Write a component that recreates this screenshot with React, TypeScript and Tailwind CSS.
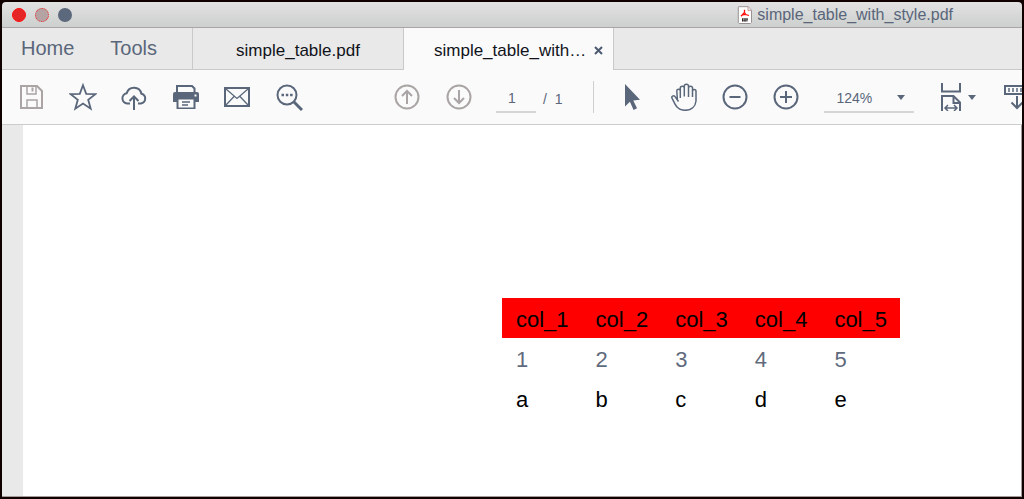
import React, { useState } from "react";

type IconButtonProps = {
  label: string;
  children: React.ReactNode;
  muted?: boolean;
};

function IconButton({ label, children, muted = false }: IconButtonProps) {
  return (
    <button
      type="button"
      aria-label={label}
      className={`size-7 shrink-0 ${muted ? "text-[#aaa4a4]" : "text-[#5a677b]"}`}
    >
      <svg
        viewBox="0 0 28 28"
        className="size-7"
        fill="none"
        stroke="currentColor"
        strokeWidth="2"
        aria-hidden="true"
      >
        {children}
      </svg>
    </button>
  );
}

function PdfFileIcon() {
  return (
    <svg viewBox="0 0 16 18" className="h-[18px] w-4 shrink-0" aria-hidden="true">
      <path d="M1.5 .7h9.8l3.2 3.6v12.2l-1 1H2.2l-.9-1V1.2z" fill="#fff" stroke="#9a9292" />
      <path d="M11 .8v3.6h3.4" fill="#eee" stroke="#c08080" strokeWidth=".8" />
      <path
        d="M7.500 3.800v2.700l-3.500 3.700M7.500 6.500l1.200 2 3.300 1M5.500 8.800l3.200-.5"
        fill="none"
        stroke="#ff1010"
        strokeWidth="1.300"
      />
      <path d="M5 13h6M5.500 14.800h4M5.500 12.500v3M8 12.500v3M10 12.500v3" stroke="#332a2a" strokeWidth="1" />
    </svg>
  );
}

function Caret() {
  return (
    <svg viewBox="0 0 8 5" className="h-[5px] w-2" aria-hidden="true">
      <path d="M0 0h8L4 5z" fill="#5a677b" />
    </svg>
  );
}

function TitleBar() {
  return (
    <header className="flex h-[26px] items-center border-b border-[#aaa6a6] bg-linear-to-b from-[#e2e2e2] to-[#cdd0ce] pr-[69px] pl-[10px]">
      <div className="flex gap-[9px]">
        <button type="button" aria-label="Close window" className="size-[14px] rounded-full border border-[#ff1010] bg-[#e62626]" />
        <button type="button" aria-label="Minimize window" className="size-[14px] rounded-full border border-dotted border-[#ff2020] bg-[#b5a3a3]" />
        <button type="button" aria-label="Zoom window" className="size-[14px] rounded-full bg-[#5c687b]" />
      </div>
      <div className="ml-auto flex items-center gap-1">
        <PdfFileIcon />
        <h1 className="pt-px text-[16px] leading-5 text-[#59657a]">simple_table_with_style.pdf</h1>
      </div>
    </header>
  );
}

function TabBar() {
  return (
    <nav className="flex h-[42px] bg-[#e9e9e9] text-[17px] text-[#11131a]">
      <div className="flex w-[190px] shrink-0 items-center gap-9 border-b border-[#c9c9c9] pb-[2px] pl-[19px] text-[20px] text-[#5a667a]">
        <button type="button">Home</button>
        <button type="button">Tools</button>
      </div>
      <button
        type="button"
        className="w-[211px] shrink-0 border-b border-l border-[#c9c9c9] pt-1"
      >
        simple_table.pdf
      </button>
      <div className="flex w-[211px] shrink-0 items-center justify-between border-x border-[#c9c9c9] bg-[#fafafa] pt-1 pr-[10px] pl-[30px]">
        <button type="button" aria-current="page">
          simple_table_with…
        </button>
        <button type="button" aria-label="Close tab" className="pb-[2px] text-[#4c5a70]">
          <svg viewBox="0 0 9 9" className="size-[9px]" stroke="currentColor" strokeWidth="2" aria-hidden="true">
            <path d="M1 1l7 7M8 1L1 8" />
          </svg>
        </button>
      </div>
      <div className="grow border-b border-[#c9c9c9]" />
    </nav>
  );
}

function Toolbar() {
  const [page, setPage] = useState("1");
  const [zoom, setZoom] = useState("124%");

  return (
    <div className="flex h-[55px] items-center overflow-hidden border-b border-[#cccccc] bg-[#fafafa] pl-[15px] text-[14px] text-[#5a667a]">
      <div className="flex w-[286px] shrink-0 justify-between">
        <IconButton label="Save" muted>
          <path d="M4 3h16l5 5v17H4z" />
          <path d="M10 3v8h9V3M10 25v-8h10v8" strokeWidth="1.500" />
          <path d="M15.500 4.500v4" />
        </IconButton>
        <IconButton label="Add to favorites">
          <path d="M14 2.200l3.200 8.600 9.200.3-7.200 5.700 2.500 8.900L14 20.600l-7.700 5.100 2.500-8.900-7.200-5.700 9.200-.3z" strokeWidth="1.800" />
        </IconButton>
        <IconButton label="Upload to cloud">
          <path d="M10 20.500H7.200a5.200 5.200 0 0 1-.5-10.300 7.600 7.600 0 0 1 14.700.5 5 5 0 0 1-.5 9.800H18" />
          <path d="M14 27V13.500M9.500 18l4.500-4.500 4.500 4.500" />
        </IconButton>
        <IconButton label="Print">
          <path d="M5 10V3h15l2.500 2.500V10" />
          <path d="M3 9h22a2 2 0 0 1 2 2v8h-3.500v7h-19v-7H1v-8a2 2 0 0 1 2-2z" fill="currentColor" stroke="none" />
          <path d="M6.500 16.500h15V24.500h-15z" fill="#fafafa" stroke="none" />
          <path d="M10 19h8M10 22h6" strokeWidth="1.500" />
          <path d="M22.500 12.500h2" stroke="#fafafa" />
        </IconButton>
        <IconButton label="Send by email">
          <path d="M2 5h24v18H2z" />
          <path d="M3 6l11 9.500L25 6M3 22l8-8.500M25 22l-8-8.500" strokeWidth="1.300" />
        </IconButton>
        <IconButton label="Search">
          <circle cx="12" cy="12" r="9.500" />
          <path d="M18.500 18.500l8.500 8.500" strokeWidth="3" />
          <path d="M6.500 12h2.500M10.800 12h2.500M15.100 12h2.500" strokeWidth="2.500" />
        </IconButton>
      </div>

      <div className="ml-[90px] flex w-[80px] shrink-0 justify-between">
        <IconButton label="Previous page" muted>
          <circle cx="14" cy="14" r="11.500" />
          <path d="M14 21V8M9 13l5-5 5 5" />
        </IconButton>
        <IconButton label="Next page" muted>
          <circle cx="14" cy="14" r="11.500" />
          <path d="M14 7v13M9 15l5 5 5-5" />
        </IconButton>
      </div>

      <label className="ml-[23px] flex shrink-0 items-center gap-[7px]">
        <input
          aria-label="Page number"
          value={page}
          onChange={(event) => setPage(event.target.value)}
          className="h-8 w-10 border-b-2 border-[#d6d6d6] bg-transparent pt-1 pr-2 text-center outline-none"
        />
        <span className="pt-1">/&nbsp; 1</span>
      </label>

      <div className="ml-[31px] h-8 w-px shrink-0 bg-[#cfcfcf]" />

      <div className="ml-[25px] flex w-[181px] shrink-0 justify-between">
        <IconButton label="Selection tool">
          <path d="M6 1v22.500l4.900-4.800 3.700 8.300 3.400-1.700-3.700-7.800 6.700-.8z" fill="currentColor" stroke="none" />
        </IconButton>
        <IconButton label="Hand tool">
          <path
            d="M8.500 18.500L5 13.600C3.500 12 1.100 13.200 2 15.200c1.600 3 2.900 6.600 5 8.900 2.400 2.700 5.300 3.200 8 3.200 6.500 0 10.500-3.800 11-9.300V8.200c0-2.400-3.500-2.400-3.500 0V14M22.500 14V5c0-2.500-4-2.500-4 0v9M18.500 13.500V3.300c0-2.700-4.200-2.700-4.200 0v10.200M14.300 13.500V5c0-2.500-4-2.500-4 0v10M10.300 14V8c0-2.300-3.500-2.300-3.500 0l.6 8.500"
            strokeWidth="1.500"
            strokeLinejoin="round"
          />
        </IconButton>
        <IconButton label="Zoom out">
          <circle cx="14" cy="14" r="11.500" />
          <path d="M8.500 14h11" />
        </IconButton>
        <IconButton label="Zoom in">
          <circle cx="14" cy="14" r="11.500" />
          <path d="M8 14h12M14 8v12" />
        </IconButton>
      </div>

      <div className="relative ml-6 shrink-0">
        <select
          aria-label="Zoom level"
          value={zoom}
          onChange={(event) => setZoom(event.target.value)}
          className="h-8 w-[90px] appearance-none border-b-2 border-[#d6d6d6] bg-transparent pt-1 pl-3 outline-none"
        >
          <option>100%</option>
          <option>124%</option>
          <option>150%</option>
        </select>
        <span className="pointer-events-none absolute top-[14px] right-[9px]">
          <Caret />
        </span>
      </div>

      <button type="button" aria-label="Page fit" className="ml-6 flex shrink-0 items-center gap-[2px] text-[#5a677b]">
        <svg viewBox="0 0 28 28" className="size-7" fill="none" stroke="currentColor" strokeWidth="2" aria-hidden="true">
          <path d="M4 0v8.500h18V0M4 28V13h11.500L22 19.500V28M15.500 13v7H22" />
          <path d="M7.500 25h11M10 22l-3 3 3 3M16 22l3 3-3 3" strokeWidth="1.500" />
        </svg>
        <Caret />
      </button>
      <span className="ml-7 flex shrink-0">
        <IconButton label="Scrolling mode">
          <path d="M1 3h25v8H1z" />
          <path d="M5 5v4M9 5v4M13 5v4M17 5v4M21 5v4" strokeWidth="1.500" />
          <path d="M13 13v12M7.500 19.500l5.500 5.500 5.500-5.500" />
        </IconButton>
      </span>
    </div>
  );
}

const columns = ["col_1", "col_2", "col_3", "col_4", "col_5"];
const numbers = ["1", "2", "3", "4", "5"];
const letters = ["a", "b", "c", "d", "e"];

function DocumentView() {
  return (
    <main className="flex grow border-r border-b border-[#a59b9b] bg-white">
      <div className="w-[21px] shrink-0 bg-[#e9e9e9]" />
      <div className="grow pt-[173px] pr-[121px] pb-16">
        <table className="ml-auto w-[398px] table-fixed border-collapse text-left text-[22px] leading-9 text-black">
          <thead>
            <tr className="bg-[#ff0000]">
              {columns.map((name) => (
                <th key={name} scope="col" className="pt-1 pl-[14px] font-normal">
                  {name}
                </th>
              ))}
            </tr>
          </thead>
          <tbody>
            <tr className="text-[#5f6b7d]">
              {numbers.map((value) => (
                <td key={value} className="pt-1 pl-[14px]">
                  {value}
                </td>
              ))}
            </tr>
            <tr>
              {letters.map((value) => (
                <td key={value} className="pt-1 pl-[14px]">
                  {value}
                </td>
              ))}
            </tr>
          </tbody>
        </table>
      </div>
    </main>
  );
}

export default function App() {
  return (
    <div className="flex min-h-screen bg-[#100000] p-[2px] font-['Liberation_Sans',Arial,sans-serif]">
      <div className="flex min-w-0 grow flex-col overflow-hidden rounded-t-[4px]">
        <TitleBar />
        <TabBar />
        <Toolbar />
        <DocumentView />
      </div>
    </div>
  );
}
